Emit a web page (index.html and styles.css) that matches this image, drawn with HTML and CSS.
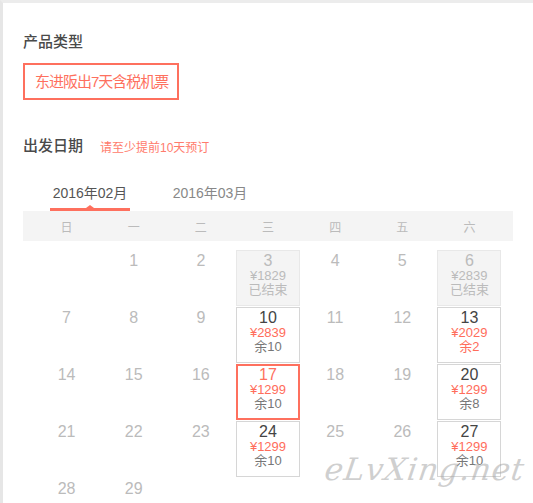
FILE: index.html
```html
<!DOCTYPE html>
<html lang="zh-CN">
<head>
<meta charset="utf-8">
<title>产品类型</title>
<link rel="stylesheet" href="styles.css">
</head>
<body>
<div class="page">
  <div class="label">产品类型</div>
  <div class="product">东进阪出7天含税机票</div>
  <div class="date-row"><span class="label">出发日期</span><span class="hint">请至少提前10天预订</span></div>
  <div class="tabs">
    <div class="tab active">2016年02月</div>
    <div class="tab">2016年03月</div>
  </div>
  <div class="week">
    <span>日</span><span>一</span><span>二</span><span>三</span><span>四</span><span>五</span><span>六</span>
  </div>
  <div class="days">
    <div class="cell"></div>
    <div class="cell"><div class="num">1</div></div>
    <div class="cell"><div class="num">2</div></div>
    <div class="cell"><div class="box off"><div class="num">3</div><div class="price">¥1829</div><div class="rest">已结束</div></div></div>
    <div class="cell"><div class="num">4</div></div>
    <div class="cell"><div class="num">5</div></div>
    <div class="cell"><div class="box off"><div class="num">6</div><div class="price">¥2839</div><div class="rest">已结束</div></div></div>

    <div class="cell"><div class="num">7</div></div>
    <div class="cell"><div class="num">8</div></div>
    <div class="cell"><div class="num">9</div></div>
    <div class="cell"><div class="box"><div class="num">10</div><div class="price">¥2839</div><div class="rest">余10</div></div></div>
    <div class="cell"><div class="num">11</div></div>
    <div class="cell"><div class="num">12</div></div>
    <div class="cell"><div class="box"><div class="num">13</div><div class="price">¥2029</div><div class="rest low">余2</div></div></div>

    <div class="cell"><div class="num">14</div></div>
    <div class="cell"><div class="num">15</div></div>
    <div class="cell"><div class="num">16</div></div>
    <div class="cell"><div class="box selected"><div class="num">17</div><div class="price">¥1299</div><div class="rest">余10</div></div></div>
    <div class="cell"><div class="num">18</div></div>
    <div class="cell"><div class="num">19</div></div>
    <div class="cell"><div class="box"><div class="num">20</div><div class="price">¥1299</div><div class="rest">余8</div></div></div>

    <div class="cell"><div class="num">21</div></div>
    <div class="cell"><div class="num">22</div></div>
    <div class="cell"><div class="num">23</div></div>
    <div class="cell"><div class="box"><div class="num">24</div><div class="price">¥1299</div><div class="rest">余10</div></div></div>
    <div class="cell"><div class="num">25</div></div>
    <div class="cell"><div class="num">26</div></div>
    <div class="cell"><div class="box"><div class="num">27</div><div class="price">¥1299</div><div class="rest">余10</div></div></div>

    <div class="cell"><div class="num">28</div></div>
    <div class="cell"><div class="num">29</div></div>
  </div>
  <div class="watermark">eLvXing.net</div>
</div>
</body>
</html>
```

FILE: styles.css
```css
html, body {
  margin: 0;
  padding: 0;
  background: #fff;
}
body {
  font-family: "Liberation Sans", "Noto Sans CJK SC", sans-serif;
  color: #333;
  overflow: hidden;
}
.page {
  position: relative;
  height: 503px;
  box-sizing: border-box;
  overflow: hidden;
  border-top: 3px solid #ececec;
  border-left: 3px solid #e6e6e6;
  padding: 29px 0 0 20px;
  width: 533px;
}
.label {
  font-size: 15px;
  line-height: 20px;
  font-weight: 500;
  color: #4a4a4a;
}
.product {
  margin-top: 11px;
  width: 156px;
  height: 37px;
  box-sizing: border-box;
  border: 2px solid #fe705e;
  padding-left: 10px;
  font-size: 15px;
  letter-spacing: -1px;
  line-height: 33px;
  color: #fe705e;
  white-space: nowrap;
}
.date-row {
  margin-top: 36px;
  display: flex;
  align-items: center;
  height: 20px;
}
.hint {
  margin-left: 17px;
  font-size: 12px;
  color: #ff7b6c;
}
.tabs {
  margin-top: 27px;
  display: flex;
  padding-left: 27px;
}
.tab {
  position: relative;
  width: 80px;
  text-align: center;
  font-size: 14px;
  line-height: 20px;
  padding-bottom: 5px;
  border-bottom: 3px solid transparent;
  color: #888;
}
.tab + .tab {
  margin-left: 40px;
}
.tab.active {
  color: #555;
  border-bottom-color: #fe705e;
}
.tab.active::after {
  content: "";
  position: absolute;
  left: 50%;
  bottom: 0;
  margin-left: -4px;
  border-left: 4px solid transparent;
  border-right: 4px solid transparent;
  border-bottom: 3px solid #fe705e;
}
.week {
  width: 490px;
  box-sizing: border-box;
  padding: 0 10px;
  height: 30px;
  background: #f4f4f4;
  display: grid;
  grid-template-columns: repeat(7, 1fr);
  align-items: center;
  text-align: center;
  font-size: 12px;
  color: #bbb;
}
.days {
  margin-top: 8px;
  width: 490px;
  box-sizing: border-box;
  padding: 0 10px;
  display: grid;
  grid-template-columns: repeat(7, 1fr);
  grid-auto-rows: 57px;
}
.cell {
  display: flex;
  flex-direction: column;
  align-items: center;
  text-align: center;
  padding-top: 4px;
}
.num {
  font-size: 16px;
  line-height: 16px;
  color: #bbb;
}
.cell .box {
  margin-top: -3px;
  width: 64px;
  height: 56px;
  box-sizing: border-box;
  border: 1px solid #d6d6d6;
  padding-top: 2px;
}
.box .num {
  color: #444;
}
.price {
  font-size: 13px;
  line-height: 14px;
  color: #ff6d5b;
}
.rest {
  font-size: 13px;
  line-height: 14px;
  color: #777;
}
.rest.low {
  color: #ff6d5b;
}
.box.off {
  background: #f4f4f4;
  border-color: #e8e8e8;
}
.box.off .num,
.box.off .price,
.box.off .rest {
  color: #bbb;
}
.box.selected {
  border: 2px solid #fe705e;
  padding-top: 1px;
}
.box.selected .num {
  color: #fe705e;
}
.watermark {
  position: absolute;
  left: 322px;
  top: 448px;
  font-family: "DejaVu Serif", serif;
  font-style: italic;
  font-size: 31px;
  letter-spacing: 1px;
  color: rgba(160, 160, 160, 0.5);
  white-space: nowrap;
  transform: skewX(-8deg);
}
```
